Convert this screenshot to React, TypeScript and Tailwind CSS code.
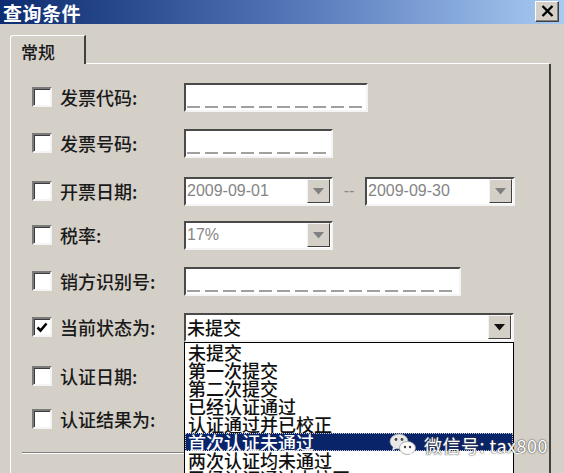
import React from 'react';

const FONT = '"Noto Sans CJK SC", "Liberation Sans", sans-serif';

function Checkbox({ checked = false }: { checked?: boolean }) {
  return (
    <div className="w-[20px] h-[20px] shrink-0 bg-white border-2 border-t-[#7a7a7a] border-l-[#7a7a7a] border-b-[#f4f4f4] border-r-[#f4f4f4] shadow-[inset_1px_1px_0_#3c3c3c] flex items-center justify-center">
      {checked && (
        <svg width="12" height="11" viewBox="0 0 12 11">
          <path d="M1.5 5.5 L4.5 8.5 L10.5 1.5" fill="none" stroke="#000" strokeWidth="2.6" />
        </svg>
      )}
    </div>
  );
}

function Dashes({ count }: { count: number }) {
  return (
    <div className="flex gap-[5px]">
      {Array.from({ length: count }).map((_, i) => (
        <span key={i} className="w-[13px] h-[2px] bg-[#a0a0a0]" />
      ))}
    </div>
  );
}

function MaskInput({ width, dashes }: { width: string; dashes: number }) {
  return (
    <div
      className={`${width} h-[29px] bg-white border-2 border-t-[#4a4a4a] border-l-[#4a4a4a] border-b-[#f4f4f4] border-r-[#f4f4f4] flex flex-col justify-end pb-[2px] pl-[1px]`}
    >
      <Dashes count={dashes} />
    </div>
  );
}

function Combo({
  width,
  value,
  disabled = true,
}: {
  width: string;
  value: string;
  disabled?: boolean;
}) {
  return (
    <div
      className={`${width} h-[29px] bg-white border-2 border-t-[#4a4a4a] border-l-[#4a4a4a] border-b-[#f4f4f4] border-r-[#f4f4f4] flex items-center`}
    >
      <span
        className={`flex-1 pl-[1px] ${
          disabled ? 'text-[#858585] text-[16px]' : 'text-[#111] text-[18px] font-medium'
        }`}
        style={disabled ? { fontFamily: '"Liberation Sans", sans-serif' } : undefined}
      >
        {value}
      </span>
      <div className="w-[23px] h-[24px] mr-[1px] bg-[#d4d0c8] border border-t-[#f4f4f4] border-l-[#f4f4f4] border-b-[#404040] border-r-[#404040] flex items-center justify-center">
        <svg width="11" height="7" viewBox="0 0 11 7">
          <polygon points="0,0 11,0 5.5,6.5" fill={disabled ? '#808080' : '#111'} />
        </svg>
      </div>
    </div>
  );
}

function Row({
  label,
  checked,
  children,
  extra = '',
}: {
  label: string;
  checked?: boolean;
  children?: React.ReactNode;
  extra?: string;
}) {
  return (
    <div className={`h-[46px] flex items-center ${extra}`}>
      <Checkbox checked={checked} />
      <span className="w-[132px] pl-[8px] text-[18px] font-medium text-[#1a1a1a] leading-none">{label}</span>
      {children}
    </div>
  );
}

const statusOptions = [
  '未提交',
  '第一次提交',
  '第二次提交',
  '已经认证通过',
  '认证通过并已校正',
  '首次认证未通过',
  '两次认证均未通过',
  '已经认证通过未校正',
];

function WeChatIcon() {
  return (
    <svg width="28" height="24" viewBox="0 0 28 24">
      <ellipse cx="10" cy="8.5" rx="9" ry="7.5" fill="#e8e8e8" stroke="#9a9a9a" strokeWidth="0.8" />
      <path d="M4 14 L3 18 L8 15 Z" fill="#e8e8e8" />
      <circle cx="7" cy="6.5" r="1.4" fill="#444" />
      <circle cx="13" cy="6.5" r="1.4" fill="#444" />
      <ellipse cx="18.5" cy="15" rx="8" ry="6.5" fill="#fafafa" stroke="#9a9a9a" strokeWidth="0.8" />
      <path d="M23 20 L25 23 L20 21 Z" fill="#fafafa" />
      <circle cx="16" cy="14" r="1.2" fill="#444" />
      <circle cx="21" cy="14" r="1.2" fill="#444" />
    </svg>
  );
}

export default function App() {
  return (
    <div
      className="relative w-[564px] h-[473px] overflow-hidden bg-[#d4d0c8]"
      style={{ fontFamily: FONT }}
    >
      {/* Title bar */}
      <div className="h-[24px] flex items-center justify-between pl-[3px] pr-[5px] bg-gradient-to-r from-[#0c2b70] via-[#5273b6] to-[#a8cbf2]">
        <span className="text-white text-[19px] font-bold leading-none tracking-[0.5px]">查询条件</span>
        <div className="w-[24px] h-[21px] mb-[2px] bg-[#d4d0c8] border border-t-[#ffffff] border-l-[#ffffff] border-b-[#404040] border-r-[#404040] shadow-[inset_-1px_-1px_0_#808080] flex items-center justify-center">
          <svg width="13" height="12" viewBox="0 0 13 12">
            <path d="M1.5 1 L11.5 11 M11.5 1 L1.5 11" stroke="#000" strokeWidth="2.4" />
          </svg>
        </div>
      </div>

      {/* Tabs */}
      <div className="mt-[11px] ml-[10px] w-[541px] flex h-[29px]">
        <div className="w-[76px] h-full border-t border-l border-t-white border-l-white border-r-2 border-r-[#404040] rounded-tl-[3px] flex items-center pl-[10px]">
          <span className="text-[17px] font-medium text-[#1a1a1a] leading-none mt-[2px]">常规</span>
        </div>
        <div className="flex-1 h-full border-b border-b-white" />
        <div className="w-[2px] h-full" />
      </div>

      {/* Panel */}
      <div className="ml-[10px] w-[541px] h-[420px] border-l border-l-white border-r-2 border-r-[#404040] pt-[10px] pl-[21px]">
        <Row label="发票代码:">
          <MaskInput width="w-[184px]" dashes={10} />
        </Row>
        <Row label="发票号码:">
          <MaskInput width="w-[149px]" dashes={8} />
        </Row>
        <Row label="开票日期:" extra="mt-[2px]">
          <Combo width="w-[149px]" value="2009-09-01" />
          <span className="w-[32px] text-center text-[#8a8a8a] text-[16px] leading-none" style={{ fontFamily: '"Liberation Sans", sans-serif' }}>
            --
          </span>
          <Combo width="w-[150px]" value="2009-09-30" />
        </Row>
        <Row label="税率:" extra="-mt-[2px]">
          <Combo width="w-[149px]" value="17%" />
        </Row>
        <Row label="销方识别号:">
          <MaskInput width="w-[277px]" dashes={15} />
        </Row>
        <Row label="当前状态为:" checked>
          <Combo width="w-[330px]" value="未提交" disabled={false} />
        </Row>
        <Row label="认证日期:" extra="mt-[3px]" />
        <Row label="认证结果为:" extra="-mt-[3px]" />
        <div className="mt-[10px] -ml-[10px] w-[500px] h-[2px] border-t border-t-[#808080] border-b border-b-white" />
      </div>

      {/* Open dropdown list */}
      <div className="absolute left-[184px] top-[342px] w-[330px] h-[150px] bg-white border border-black">
        {statusOptions.map((opt, i) => (
          <div
            key={opt}
            className={`h-[18px] pl-[3px] text-[18px] font-medium leading-[18px] whitespace-nowrap ${
              i === 5
                ? 'bg-[#0a246a] text-white outline-1 outline-dotted outline-[#c8c8c8] -outline-offset-1'
                : 'text-[#111]'
            }`}
          >
            {opt}
          </div>
        ))}
      </div>

      {/* Watermark */}
      <div className="absolute left-[389px] top-[433px] flex items-center gap-[7px]">
        <WeChatIcon />
        <span className="text-[18px] text-white leading-none [text-shadow:0_0_2px_#4a4a4a,0_0_1px_#4a4a4a] tracking-[0.5px]">
          微信号: tax800
        </span>
      </div>
    </div>
  );
}
